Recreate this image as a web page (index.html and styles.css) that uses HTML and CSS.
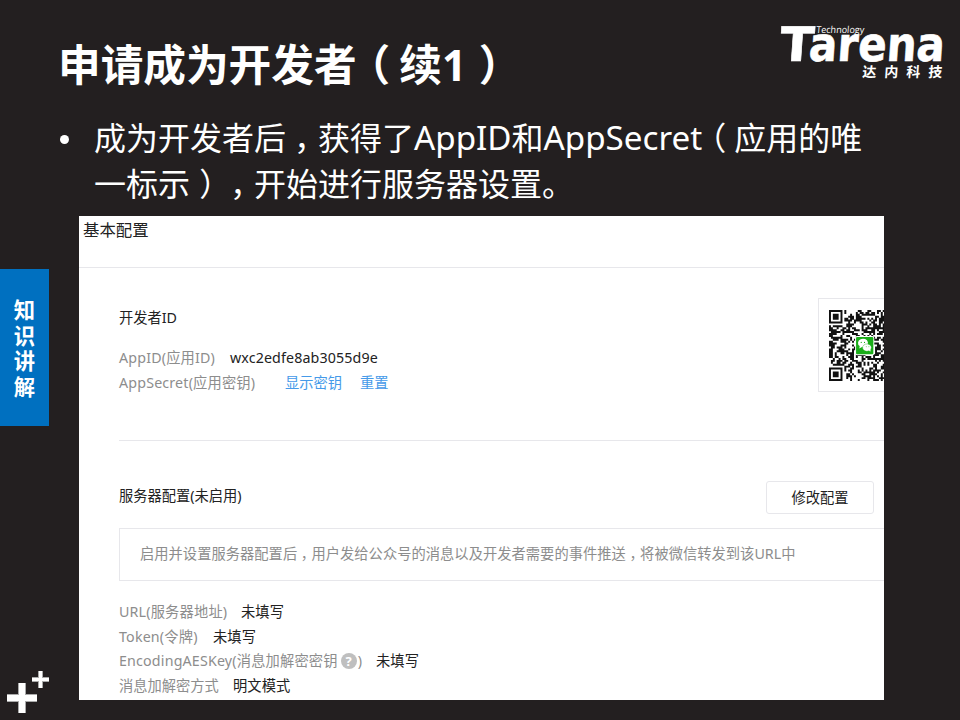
FILE: index.html
```html
<!DOCTYPE html>
<html lang="zh-CN">
<head>
<meta charset="utf-8">
<title>申请成为开发者（续1）</title>
<link rel="stylesheet" href="styles.css">
</head>
<body>
<div class="slide">
  <aside class="rail">
    <div class="tab">知<br>识<br>讲<br>解</div>
    <svg class="pluses" width="44" height="44" viewBox="0 0 44 44">
      <path d="M11 12h8v11h11v8H19v11h-8V31H0v-8h11z" fill="#aaa"/>
      <path d="M12 12h6v12h12v6H18v12h-6V30H0v-6h12z" fill="#fff"/>
      <path d="M31 0h5v6h6v5h-6v6h-5v-6h-6V6h6z" fill="#aaa"/>
      <path d="M32 0h3v7h7v3h-7v7h-3v-7h-7V7h7z" fill="#fff"/>
    </svg>
  </aside>
  <main class="main">
    <header class="head">
      <h1>申请成为开发者<span class="punct">（</span>续1<span class="punct">）</span></h1>
      <svg class="logo" width="170" height="60" viewBox="0 0 170 60">
        <g transform="translate(0 41) skewX(-4)">
          <text class="brand" x="0" y="0" textLength="34" lengthAdjust="spacingAndGlyphs">T</text>
          <text class="brand" x="29" y="0" textLength="136" lengthAdjust="spacingAndGlyphs">arena</text>
        </g>
        <text class="tech" transform="translate(37 12.5) skewX(-5)" textLength="48" lengthAdjust="spacingAndGlyphs">Technology</text>
        <text class="cn" transform="translate(83 57) skewX(-4)">达内科技</text>
      </svg>
    </header>
    <ul class="points">
      <li><span class="line">成为开发者后<span class="punct">，</span>获得了<span class="latin">AppID</span>和<span class="latin">AppSecret</span><span class="punct">（</span>应用的唯</span>
      <span class="line">一标示<span class="punct close">）</span><span class="punct">，</span>开始进行服务器设置。</span></li>
    </ul>
    <section class="panel">
      <h2>基本配置</h2>
      <div class="account">
        <div class="info">
          <h3>开发者ID</h3>
          <p><span class="label w-id">AppID(应用ID)</span><span class="value">wxc2edfe8ab3055d9e</span></p>
          <p><span class="label w-secret">AppSecret(应用密钥)</span><a class="show">显示密钥</a><a>重置</a></p>
        </div>
        <div class="qr">
          <svg width="71" height="71" viewBox="0 0 37 37">
            <path id="modules" fill="#111"/>
            <rect x="13.6" y="13.6" width="10" height="10" rx="1" fill="#fff"/>
            <rect x="14.1" y="14.1" width="9" height="9" rx=".6" fill="#1aad19"/>
            <path d="M15.8 20l.2-1.2a2.6 2.2 0 1 1 1.2.5z" fill="#fff"/>
            <path d="M21.7 21.8l-.9-.5a2.3 1.9 0 1 1 1-.8z" fill="#fff" stroke="#1aad19" stroke-width=".2"/>
            <g fill="#1aad19"><circle cx="16.8" cy="16.9" r=".3"/><circle cx="18.5" cy="16.9" r=".3"/><circle cx="19.4" cy="19.1" r=".25"/><circle cx="20.8" cy="19.1" r=".25"/></g>
          </svg>
        </div>
      </div>
      <div class="server">
        <div class="server-head"><h3>服务器配置(未启用)</h3><button>修改配置</button></div>
        <div class="notice">启用并设置服务器配置后<span class="punct">，</span>用户发给公众号的消息以及开发者需要的事件推送<span class="punct">，</span>将被微信转发到该URL中</div>
        <p><span class="label w-url">URL(服务器地址)</span><span class="value">未填写</span></p>
        <p><span class="label w-token">Token(令牌)</span><span class="value">未填写</span></p>
        <p><span class="label w-key">EncodingAESKey(消息加解密密钥<i class="help">?</i>)</span><span class="value">未填写</span></p>
        <p><span class="label w-mode">消息加解密方式</span><span class="value">明文模式</span></p>
      </div>
    </section>
  </main>
</div>
<script src="qr.js"></script>
</body>
</html>
```
FILE: styles.css
```css
* { box-sizing: border-box; margin: 0; padding: 0; }
body {
  width: 960px; height: 720px; overflow: hidden;
  background: #231f20; color: #fff;
  font-family: "Noto Sans", "Noto Sans CJK SC", sans-serif;
  text-spacing-trim: space-all;
}
.slide { display: grid; grid-template-columns: 49px 1fr; height: 720px; }
.rail { display: flex; flex-direction: column; padding-top: 269px; }
.tab {
  height: 157px; padding: 28px 0 0; background: #0070c0;
  font-size: 21.3px; line-height: 25.5px; font-weight: 700; text-align: center;
}
.pluses { margin: 245px 0 0 7px; }
.main { min-width: 0; }
.head { display: flex; justify-content: space-between; height: 115px; padding: 20px 11px 0 9px; }
h1 { margin-top: 12px; font-size: 42.67px; line-height: 66px; font-weight: 700; white-space: nowrap; }
.punct {
  display: inline-block; width: 1em; text-align: center; letter-spacing: 0;
  font-family: "Noto Sans CJK SC", sans-serif; font-feature-settings: "halt"; line-height: 1;
}
h1 .punct, .close { padding-left: .08em; }
.logo { display: block; overflow: visible; fill: #fff; }
.brand { font: 700 47.5px "DejaVu Sans", sans-serif; stroke: #fff; stroke-width: .6px; }
.tech { font: 500 9.5px "Open Sans", sans-serif; }
.cn { font: 700 14px "Noto Sans CJK SC", sans-serif; letter-spacing: 8px; }
.points { height: 101px; padding-left: 45px; list-style: none; }
.points li { display: grid; font-size: 32px; line-height: 46px; }
.points li::before {
  content: ""; grid-area: 1 / 1; width: 9px; height: 9px; margin: 20px 0 0 -34px;
  border-radius: 50%; background: #fff;
}
.line { height: 46px; white-space: nowrap; }
.line:first-child { grid-area: 1 / 1; }
.latin { font-size: 33.2px; line-height: 1; }
.panel {
  width: 805px; height: 484px; margin-left: 30px; overflow: hidden;
  background: #fff; color: #222; font-size: 14.25px;
}
h2 { height: 52px; padding: 2px 4px; border-bottom: 1px solid #e7e7eb; font-size: 16.4px; line-height: 24px; font-weight: 400; }
h3 { font-size: 14.25px; line-height: 24px; font-weight: 400; }
.account {
  display: flex; justify-content: space-between; height: 173px; margin-left: 40px;
  padding-top: 30px; border-bottom: 1px solid #e7e7eb;
}
.info { padding-top: 8px; }
.info h3 { margin-bottom: 16px; }
p { display: flex; line-height: 24.5px; height: 24.5px; white-space: nowrap; }
.label { color: #8d8d8d; letter-spacing: .17px; }
.value { letter-spacing: .12px; }
.w-id { width: 111px; }
.w-secret { width: 166px; }
.w-url { width: 122px; }
.w-token { width: 94px; }
.w-key { display: flex; width: 257px; }
.w-mode { width: 114px; letter-spacing: 0; }
a { color: #459ae9; }
.show { width: 75px; }
.qr { flex: none; width: 94px; height: 94px; margin-right: -28px; padding: 11px 0 0 10px; border: 1px solid #e7e7eb; }
.qr svg { display: block; }
.server { margin-left: 40px; padding-top: 40px; }
.server-head { display: flex; justify-content: space-between; height: 47px; padding-right: 10px; }
.server-head h3 { padding-top: 3px; }
button {
  width: 108px; height: 33px; border: 1px solid #e7e7eb; border-radius: 3px;
  background: #fff; color: #222; font: inherit; line-height: 30px;
}
.notice {
  height: 53px; margin-bottom: 19px; padding-left: 20px; border: 1px solid #e7e7eb; border-right: 0;
  color: #8d8d8d; line-height: 50px; letter-spacing: .04px; white-space: nowrap;
}
.help {
  width: 16px; height: 16px; margin: 4px 1px 0 3px; border-radius: 50%;
  background: #bfbfbf; color: #fff; font: 700 13px/16px "Noto Sans", sans-serif; text-align: center;
}
```
FILE: qr.js
```js
const N = 37;
let seed = 20153;
const rand = () => (seed = (seed * 1103515245 + 12345) % 2147483648) / 2147483648;
const finder = (x, y) => {
  const d = Math.max(Math.abs(x - 3), Math.abs(y - 3));
  return d !== 2 && d < 4;
};
let d = "";
for (let y = 0; y < N; y++) {
  for (let x = 0; x < N; x++) {
    const fx = x > N - 9 ? x - (N - 7) : x;
    const fy = y > N - 9 ? y - (N - 7) : y;
    const inCorner = fx < 8 && fy < 8 && !(x > 8 && y > 8);
    const r = rand();
    if (inCorner ? finder(fx, fy) : r < 0.5) d += `M${x} ${y}h1.02v1.02h-1.02z`;
  }
}
document.getElementById("modules").setAttribute("d", d);
```
